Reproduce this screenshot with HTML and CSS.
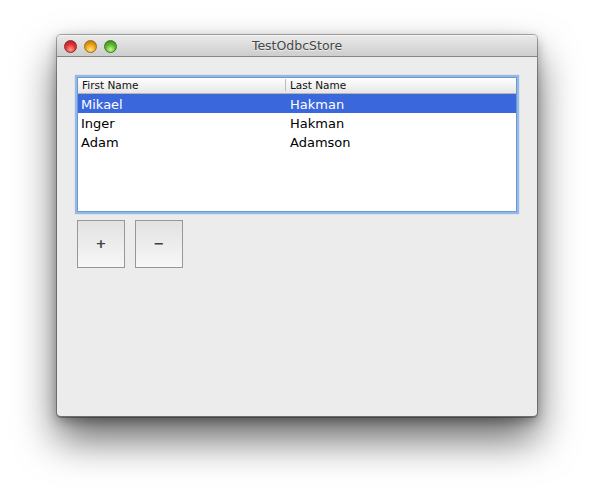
FILE: index.html
```html
<!DOCTYPE html>
<html>
<head>
<meta charset="utf-8">
<link rel="stylesheet" href="styles.css">
</head>
<body>
<div class="window">
  <div class="titlebar">
    <div class="lights">
      <span class="light red"></span>
      <span class="light yellow"></span>
      <span class="light green"></span>
    </div>
    <div class="title">TestOdbcStore</div>
  </div>
  <div class="content">
    <div class="table">
      <div class="thead">
        <div class="th col1">First Name</div>
        <div class="th col2">Last Name</div>
      </div>
      <div class="row selected"><div class="td col1">Mikael</div><div class="td col2">Hakman</div></div>
      <div class="row"><div class="td col1">Inger</div><div class="td col2">Hakman</div></div>
      <div class="row"><div class="td col1">Adam</div><div class="td col2">Adamson</div></div>
    </div>
    <div class="buttons">
      <button class="btn">+</button>
      <button class="btn">&minus;</button>
    </div>
  </div>
</div>
</body>
</html>
```
FILE: styles.css
```css
html, body {
  margin: 0;
  padding: 0;
  background: #ffffff;
}
body {
  width: 594px;
  height: 496px;
  padding: 35px 0 0 57px;
  box-sizing: border-box;
  font-family: "DejaVu Sans", "Liberation Sans", sans-serif;
  overflow: hidden;
}
.window {
  width: 480px;
  height: 382px;
  background: #ececec;
  border-radius: 4px;
  box-shadow: 0 0 0 1px rgba(0,0,0,0.3), 0 22px 40px rgba(0,0,0,0.6), 0 4px 12px rgba(0,0,0,0.3);
  display: flex;
  flex-direction: column;
  overflow: hidden;
  border-bottom: 1px solid #6f6f6f;
  box-sizing: border-box;
}
.titlebar {
  height: 22px;
  flex: none;
  box-sizing: border-box;
  background: linear-gradient(#e9e9e9, #cdcdcd);
  border-bottom: 1px solid #858585;
  border-top: 1px solid #f4f4f4;
  display: flex;
  align-items: center;
  position: relative;
}
.lights {
  display: flex;
  gap: 7px;
  padding-left: 7px;
  padding-top: 0;
}
.light {
  width: 13px;
  height: 13px;
  border-radius: 50%;
  box-sizing: border-box;
}
.red {
  background: radial-gradient(circle at 50% 78%, #ffa090 0, #e8383c 45%, #a3161a 100%);
  border: 1px solid #8c2a2a;
}
.yellow {
  background: radial-gradient(circle at 50% 78%, #ffe480 0, #f0a81a 45%, #ae6d08 100%);
  border: 1px solid #9a6a1a;
}
.green {
  background: radial-gradient(circle at 50% 78%, #c8f890 0, #62bf32 45%, #2c7a12 100%);
  border: 1px solid #3d7a25;
}
.title {
  position: absolute;
  left: 0;
  right: 0;
  top: 2px;
  text-align: center;
  font-size: 12.5px;
  color: #464646;
  text-shadow: 0 1px 0 rgba(255,255,255,0.6);
}
.content {
  padding: 20px 0 0 20px;
}
.table {
  width: 440px;
  height: 135px;
  box-sizing: border-box;
  background: #ffffff;
  border: 1px solid #6b98d8;
  box-shadow: 0 0 1px 2px rgba(120,168,230,0.75);
}
.thead {
  height: 16px;
  box-sizing: border-box;
  display: flex;
  background: linear-gradient(#ffffff, #e6e6e6);
  border-bottom: 1px solid #b5b5b5;
}
.th {
  font-size: 10.5px;
  line-height: 15px;
  color: #111;
  box-sizing: border-box;
}
.thead .col1 {
  padding-left: 4px;
  border-right: 1px solid #bdbdbd;
  height: 12px;
  margin-top: 1px;
  line-height: 13px;
}
.thead .col2 {
  padding-left: 4px;
}
.col1 {
  width: 208px;
  flex: none;
}
.col2 {
  flex: 1;
}
.row {
  display: flex;
  height: 19px;
  align-items: center;
}
.td {
  font-size: 13px;
  line-height: 15px;
  padding-top: 2px;
  color: #000;
  box-sizing: border-box;
}
.row .col1 {
  padding-left: 3px;
}
.row .col2 {
  padding-left: 4px;
}
.row.selected {
  background: #3b67dc;
}
.row.selected .td {
  color: #ffffff;
}
.buttons {
  display: flex;
  gap: 10px;
  margin-top: 8px;
}
.btn {
  width: 48px;
  height: 48px;
  margin: 0;
  padding: 0;
  box-sizing: border-box;
  border: 1px solid #979797;
  background: linear-gradient(#e2e2e2, #f7f7f7);
  font-family: "DejaVu Sans", sans-serif;
  font-size: 13px;
  font-weight: bold;
  color: #404040;
  line-height: 46px;
  text-align: center;
}
```
